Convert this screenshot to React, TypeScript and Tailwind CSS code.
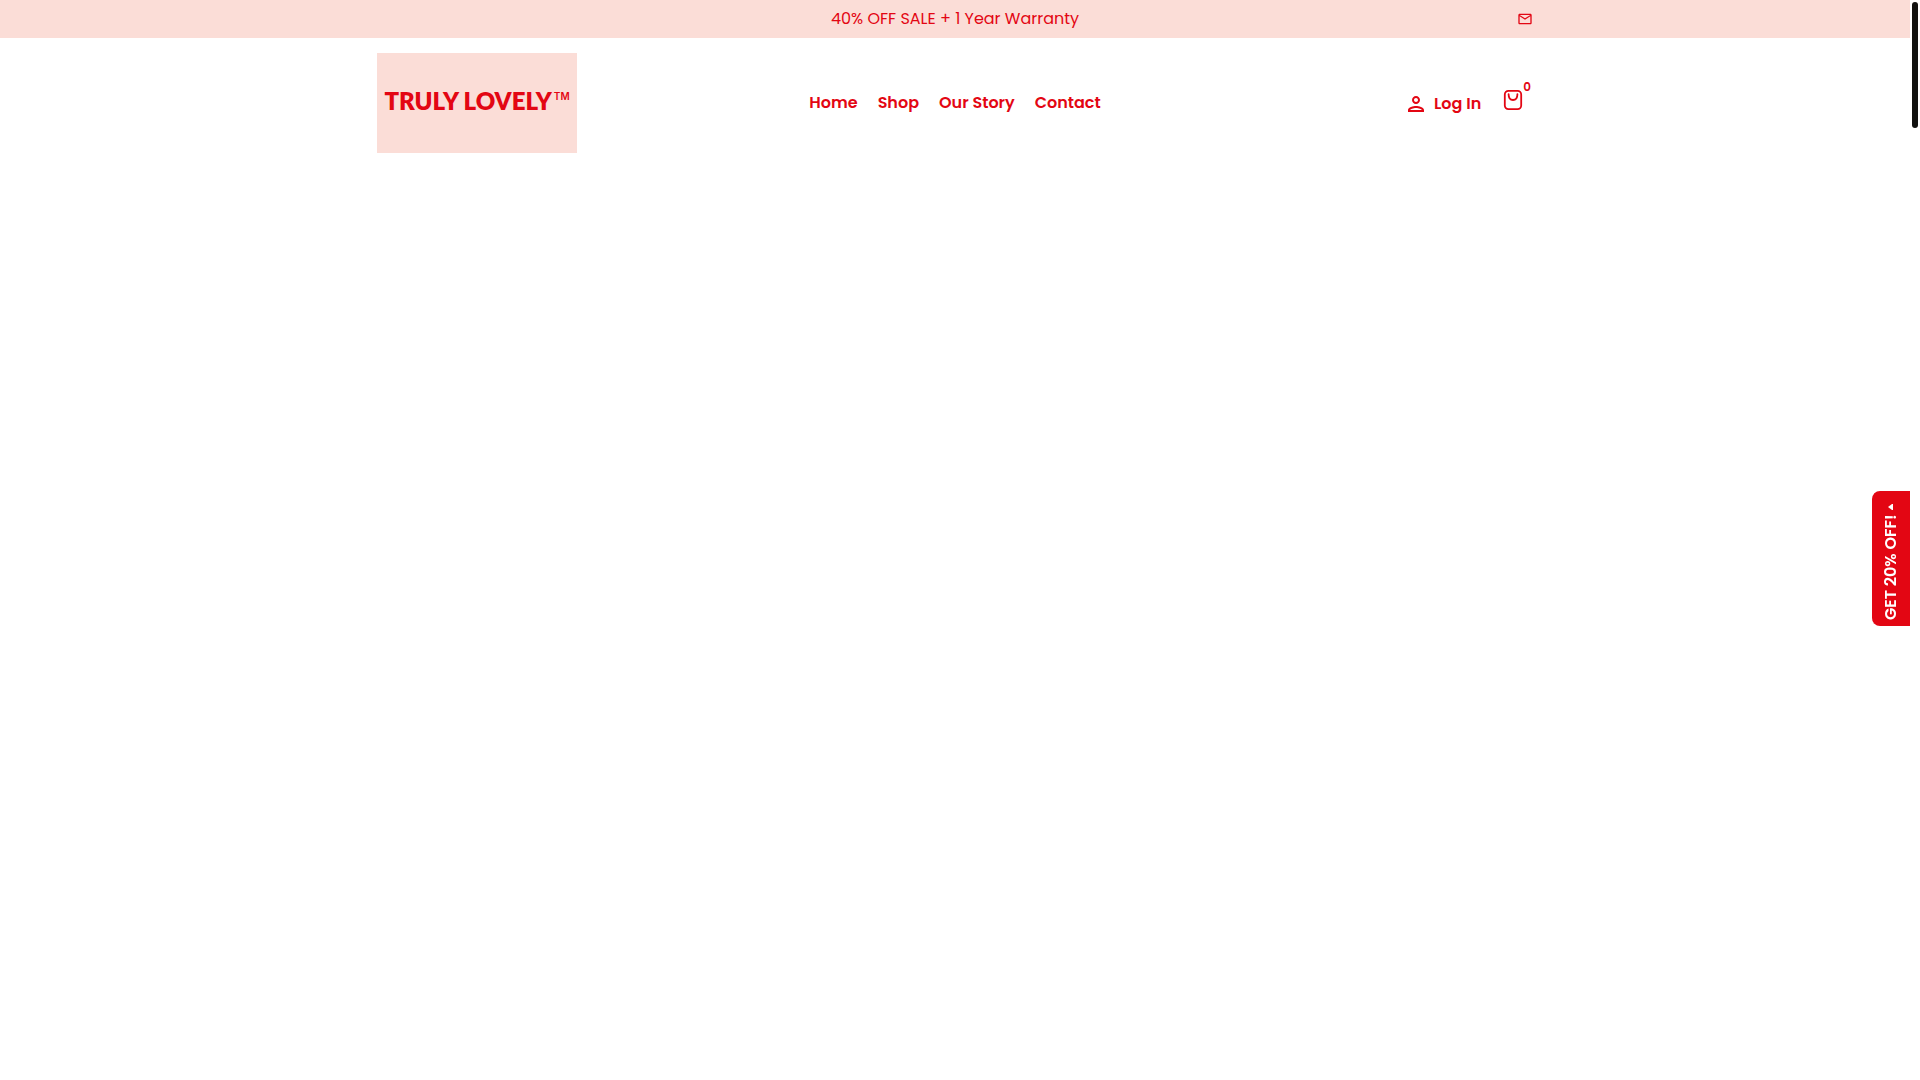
import { MdMailOutline, MdOutlinePerson } from "react-icons/md";

const LINKS = [
  { label: "Home", href: "#home" },
  { label: "Shop", href: "#shop" },
  { label: "Our Story", href: "#our-story" },
  { label: "Contact", href: "#contact" },
];

export default function App() {
  return (
    <div className="relative min-h-screen bg-white pr-[10px] font-['Poppins','Inter',sans-serif] text-base text-[#e30613]">
      <AnnouncementBar />
      <Header />
      <main />

      {/* Discount tab, pinned to the side of the window */}
      <button
        type="button"
        className="fixed top-[491px] right-[10px] flex h-[135px] w-[38px] rotate-180 items-center gap-1 rounded-r-lg bg-[#e30613] pt-[6px] font-semibold whitespace-nowrap text-white [writing-mode:vertical-rl]"
      >
        <span className="shrink-0">GET 20% OFF!</span>
        <svg viewBox="0 0 5 6" className="h-[6px] w-[5px] shrink-0" fill="currentColor" aria-hidden="true">
          <path d="M0 0h1L5 3 1 6H0z" />
        </svg>
      </button>

      {/* Scroll thumb */}
      <div className="fixed top-[2px] right-[2px] h-[126px] w-[6px] rounded-full bg-[#11110f]" />
    </div>
  );
}

function AnnouncementBar() {
  return (
    <div className="bg-[#fbddd7]">
      <div className="mx-auto grid h-[38px] max-w-[1180px] grid-cols-[1fr_auto_1fr] items-center px-3">
        <p className="col-start-2">40% OFF SALE + 1 Year Warranty</p>
        <a href="mailto:hello@example.com" aria-label="Email" className="justify-self-end">
          <MdMailOutline className="h-4 w-4" />
        </a>
      </div>
    </div>
  );
}

function Header() {
  return (
    <header className="mx-auto grid max-w-[1180px] grid-cols-[1fr_auto_1fr] items-center px-3 py-[15px]">
      <a
        href="#home"
        className="flex h-[100px] w-[200px] items-start justify-center gap-[2px] bg-[#fbddd7] pt-8 font-['Lato',sans-serif] font-extrabold"
      >
        <span className="text-[24px] leading-8">TRULY LOVELY</span>
        <span className="pt-[3px] font-['Inter',sans-serif] text-[10px] leading-4 font-semibold">TM</span>
      </a>

      <nav>
        <ul className="flex gap-5 font-semibold">
          {LINKS.map((l) => (
            <li key={l.label}>
              <a href={l.href}>{l.label}</a>
            </li>
          ))}
        </ul>
      </nav>

      <div className="flex items-center gap-5 justify-self-end pr-[2px]">
        <a href="#login" className="flex items-center gap-[6px] pt-[2px] font-semibold">
          <MdOutlinePerson className="h-6 w-6" />
          Log In
        </a>
        <a href="#cart" aria-label="Cart" className="flex items-start pb-[6px]">
          <BagIcon />
          <span className="-mt-[7px] -ml-[2px] text-xs leading-3 font-semibold">0</span>
        </a>
      </div>
    </header>
  );
}

function BagIcon() {
  return (
    <svg viewBox="0 0 24 24" className="h-6 w-6" fill="none" stroke="currentColor" strokeWidth="1.8" aria-hidden="true">
      <rect x="3.8" y="2.8" width="16.4" height="18.4" rx="3.6" />
      <path d="M7.6 6.2c0 3.8 1.7 5.8 4.4 5.8s4.4-2 4.4-5.8" strokeLinecap="round" />
    </svg>
  );
}
